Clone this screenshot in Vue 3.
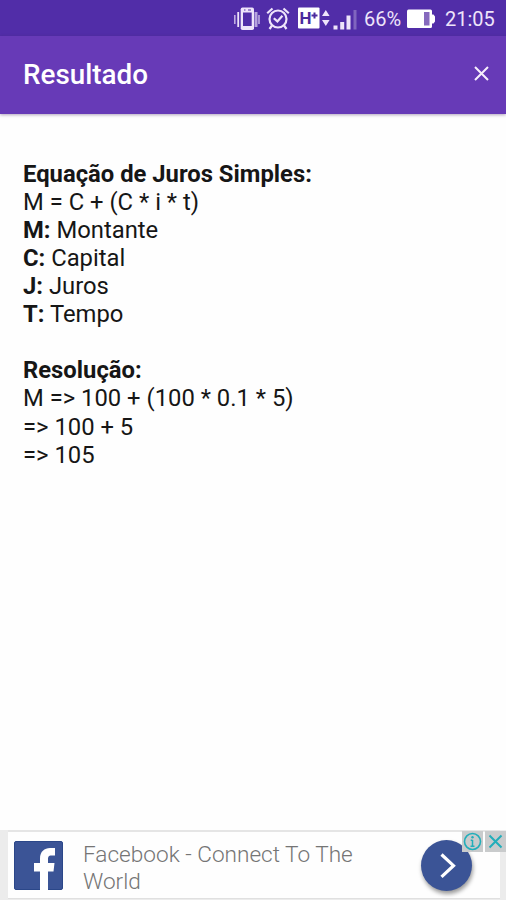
<template>
  <div class="screen">
    <div class="status-bar">
      <svg class="status-icons" width="134" height="36" viewBox="0 0 134 36">
        <!-- vibrate -->
        <rect x="14.700" y="7.500" width="13.300" height="22.500" rx="1.800" fill="#eee4fa" />
        <path d="M17 12.500h8.700v13.500H17z" fill="#512da8" />
        <path d="M18 10h1.500M22 10h3" stroke="#512da8" stroke-width="1.200" />
        <g fill="none" stroke="#eee4fa">
          <path d="M12.200 12v15" stroke-width="1.800" />
          <path d="M30 12v15" stroke-width="3" opacity="0.650" />
          <path d="M8.800 15v9M33 15v9" stroke-width="1.600" opacity="0.700" />
        </g>
        <!-- alarm -->
        <g fill="none" stroke="#eee4fa" stroke-width="2.200">
          <circle cx="52" cy="19" r="8.500" />
          <path d="M41.200 13.200l5.300-4.700M62.800 13.200l-5.300-4.700M46 25.500l-2.500 3.500M58 25.500l2.500 3.500" />
          <path d="M47.800 18.200l3.600 3.200 5-5.700" />
        </g>
        <rect x="72" y="7.500" width="21.500" height="21" rx="1" fill="#fff" />
        <text x="73.500" y="24" class="network">H</text>
        <path d="M85.500 15.500h6M88.500 12.500v6" stroke="#4b2a9e" stroke-width="2" />
        <path d="M96 16l3.800-6 3.800 6zM96 20h7.600l-3.800 6z" fill="#eee4fa" />
        <path d="M107.500 25.500h4v4h-4zM114.200 22h4v7.500h-4zM120.500 15.500h4v14h-4z" fill="#eee4fa" />
        <path d="M127.500 10h3v19.500h-3z" fill="#fff" opacity="0.270" />
      </svg>
      <span class="percent">66%</span>
      <svg class="battery" width="29" height="20" viewBox="0 0 29 20">
        <path d="M1.500 0.500h22q1.500 0 1.500 1.500V5.500h1.500l1.500 2v5l-1.500 2H25v3q0 1.500-1.500 1.500h-22Q0 19 0 17.500v-15Q0 0.500 1.500 0.500z" fill="#fff" />
        <rect x="17" y="3" width="5.500" height="13.500" fill="#866abd" />
      </svg>
      <span class="clock">21:05</span>
    </div>

    <header class="toolbar">
      <h1>Resultado</h1>
      <button class="close" aria-label="Fechar">
        <svg width="15" height="15" viewBox="0 0 15 15">
          <path d="M1 1l13 13M14 1L1 14" stroke="#f7effc" stroke-width="2" />
        </svg>
      </button>
    </header>

    <main class="content">
      <section>
        <strong class="title">Equação de Juros Simples:</strong>
        <p>M = C + (C * i * t)</p>
        <p v-for="item in legend" :key="item.symbol">
          <b>{{ item.symbol }}:</b> {{ item.name }}
        </p>
      </section>
      <section>
        <strong class="title">Resolução:</strong>
        <p v-for="step in steps" :key="step">{{ step }}</p>
      </section>
    </main>

    <footer class="ad">
      <div class="ad-card">
        <svg class="facebook" width="49" height="49" viewBox="0 0 49 49">
          <rect x="0.500" y="0.500" width="48" height="48" rx="1.500" fill="#3b5496" stroke="#2b4789" />
          <path d="M26 49V30.500h-6V22h6v-4.500c0-7 4.500-10.500 10-10.500h5v7.500h-3.500c-3 0-3.500 1.500-3.500 4V22h6.500l-1 8.500H34V49z" fill="#fff" />
        </svg>
        <p class="ad-text">Facebook - Connect To The World</p>
        <button class="go" aria-label="Abrir">
          <svg width="51" height="51" viewBox="0 0 51 51">
            <path d="M20.500 14.500l12 11.200-12 11.200" fill="none" stroke="#fff" stroke-width="3.200" />
          </svg>
        </button>
      </div>
      <div class="ad-choices">
        <svg width="21" height="21" viewBox="0 0 21 21">
          <rect width="21" height="21" fill="#c9cbcc" />
          <circle cx="10.500" cy="10.500" r="8" fill="none" stroke="#22aeba" stroke-width="1.600" />
          <path d="M10.500 9v6.500M8.700 9.300h1.800M8.500 15.300h4" stroke="#22aeba" stroke-width="1.500" />
          <circle cx="10.500" cy="6.200" r="1.200" fill="#22aeba" />
        </svg>
        <svg width="21" height="21" viewBox="0 0 21 21">
          <rect width="21" height="21" fill="#c9cbcc" />
          <path d="M4.500 4.500l12 12M16.500 4.500l-12 12" stroke="#22aeba" stroke-width="2" />
        </svg>
      </div>
    </footer>
  </div>
</template>

<script setup>
const legend = [
  { symbol: "M", name: "Montante" },
  { symbol: "C", name: "Capital" },
  { symbol: "J", name: "Juros" },
  { symbol: "T", name: "Tempo" },
];

const steps = ["M => 100 + (100 * 0.1 * 5)", "=> 100 + 5", "=> 105"];
</script>

<style>
body {
  margin: 0;
  background: #fff;
}
</style>

<style scoped>
.screen {
  display: flex;
  flex-direction: column;
  width: 506px;
  height: 900px;
  overflow: hidden;
  background: #fefefe;
  font-family: Roboto, "Liberation Sans", sans-serif;
}

p,
h1 {
  margin: 0;
}

button {
  border: 0;
  padding: 0;
  background: none;
}

svg {
  display: block;
}

.status-bar {
  display: flex;
  align-items: center;
  flex: none;
  height: 36px;
  padding-left: 226px;
  background: #512da8;
  color: #eee4fa;
}

.network {
  font: bold 17px Roboto, sans-serif;
  fill: #4b2a9e;
}

.percent {
  width: 43px;
  margin-left: 4px;
  font-size: 20px;
  line-height: 36px;
  padding-top: 2px;
}

.battery {
  margin-top: 1px;
}

.clock {
  margin-left: 9px;
  font-size: 20px;
  line-height: 36px;
  padding-top: 2px;
  white-space: nowrap;
}

.toolbar {
  display: flex;
  align-items: center;
  justify-content: space-between;
  flex: none;
  height: 78px;
  padding: 0 17px 0 23px;
  box-sizing: border-box;
  background: #673ab7;
  box-shadow: 0 1px 3px rgba(60, 30, 90, 0.4);
}

.toolbar h1 {
  color: #fff;
  font-size: 27.8px;
  font-weight: 500;
  line-height: 36px;
}

.close {
  margin-bottom: 4px;
}

.content {
  flex: 1;
  padding: 45.5px 23px 0;
  color: #161616;
  font-size: 23.8px;
  line-height: 28.12px;
}

.content section + section {
  margin-top: 28.12px;
}

.title {
  display: block;
  font-weight: 700;
}

.content b {
  font-weight: 700;
}

.ad {
  position: relative;
  flex: none;
  height: 70px;
  padding: 0 6px 0 8px;
  box-sizing: border-box;
  background: #ececec;
}

.ad-card {
  display: flex;
  align-items: flex-start;
  height: 69px;
  padding: 10px 28px 0 6px;
  box-sizing: border-box;
  border-top: 2px solid #e5e5e5;
  border-bottom: 1px solid #e0e0e0;
  background: #fefefe;
}

.facebook {
  margin-top: -1px;
}

.ad-text {
  width: 290px;
  margin: -1px auto 0 20px;
  color: #757575;
  font-size: 22.6px;
  font-weight: 300;
  line-height: 27px;
}

.go {
  margin-top: -2px;
  width: 51px;
  height: 51px;
  border-radius: 50%;
  background: #3b5496;
  box-shadow: 1px 3px 4px rgba(0, 0, 0, 0.4);
}

.ad-choices {
  position: absolute;
  top: 1px;
  right: 0;
  display: flex;
  gap: 2px;
}
</style>
